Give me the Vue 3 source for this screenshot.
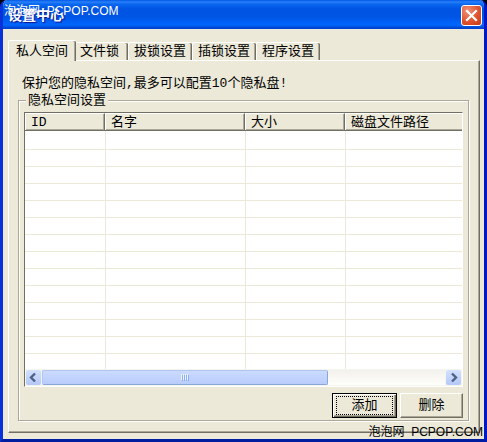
<script setup>
import { ref } from 'vue'

// 选项卡
const tabs = ['私人空间', '文件锁', '拔锁设置', '插锁设置', '程序设置']
const active = ref(0)

// 列表列定义，最后一列占满剩余宽度
const columns = [
  { name: 'ID', cls: 'col-id' },
  { name: '名字', cls: 'col-name' },
  { name: '大小', cls: 'col-size' },
  { name: '磁盘文件路径', cls: 'col-path' }
]
const rowCount = 14

// 水印文字，中间是两个空格
const mark = '泡泡网  PCPOP.COM'
</script>

<template>
  <div class="desktop">
    <div class="window">
      <header class="title-bar">
        <h1>设置中心</h1>
        <button class="close" type="button" aria-label="关闭">
          <svg width="21" height="21" viewBox="0 0 21 21">
            <path d="M6 6l9 9M15 6l-9 9" stroke="#fff" stroke-width="2.2" stroke-linecap="square" />
          </svg>
        </button>
      </header>

      <main class="body">
        <nav class="tabs" role="tablist">
          <button
            v-for="(tab, i) in tabs"
            :key="tab"
            type="button"
            role="tab"
            class="tab"
            :class="{ active: active === i }"
            :aria-selected="active === i"
            @click="active = i"
          >{{ tab }}</button>
        </nav>

        <section class="page">
          <p class="tip">保护您的隐私空间,最多可以配置10个隐私盘!</p>
          <fieldset class="group">
            <legend>隐私空间设置</legend>
            <div class="list">
              <div class="list-view">
                <table>
                  <thead>
                    <tr>
                      <th v-for="col in columns" :key="col.name" :class="col.cls">{{ col.name }}</th>
                    </tr>
                  </thead>
                  <tbody>
                    <tr v-for="r in rowCount" :key="r">
                      <td v-for="col in columns" :key="col.name"></td>
                    </tr>
                  </tbody>
                </table>
              </div>
              <div class="scrollbar">
                <button class="arrow" type="button" aria-label="向左">
                  <svg width="15" height="15" viewBox="0 0 15 15">
                    <path d="M9 3.5l-4 4 4 4" fill="none" stroke="#4d6185" stroke-width="2.4" />
                  </svg>
                </button>
                <div class="track">
                  <div class="thumb"><i></i><i></i><i></i><i></i></div>
                </div>
                <button class="arrow" type="button" aria-label="向右">
                  <svg width="15" height="15" viewBox="0 0 15 15">
                    <path d="M6 3.5l4 4-4 4" fill="none" stroke="#4d6185" stroke-width="2.4" />
                  </svg>
                </button>
              </div>
            </div>
            <div class="actions">
              <button class="btn default" type="button"><span>添加</span></button>
              <button class="btn" type="button"><span>删除</span></button>
            </div>
          </fieldset>
        </section>
      </main>
    </div>

    <span class="mark top">{{ mark }}</span>
    <span class="mark bottom">{{ mark }}</span>
  </div>
</template>

<style>
body { margin: 0; background: #000; }
</style>

<style scoped>
* { box-sizing: border-box; }
.desktop {
  position: relative; height: 100vh; background: #000;
  font-family: "Liberation Mono", "Noto Sans CJK SC", monospace;
  font-size: 13px; line-height: 16px; color: #000;
}
button { font: inherit; color: inherit; padding: 0; margin: 0; }
svg { display: block; }

.window {
  display: flex; flex-direction: column; height: 100%;
  background: #ece9d8; border-radius: 7px 7px 0 0; overflow: hidden;
  border: solid #0831d9; border-width: 0 3px 3px; border-bottom-color: #001ea0; border-right-color: #0019c0;
}
.title-bar {
  display: flex; align-items: center; justify-content: space-between;
  height: 29px; flex: none; margin: 0 -3px; padding: 2px 5px 0 8px;
  background: linear-gradient(#0058e6 0, #2a80fa 2px, #0a68f0 4px, #0054e3 9px, #0055e5 17px, #0066ff 25px, #0050d8 27px, #003dd0 29px);
}
.title-bar h1 {
  margin: 0; font-size: 14px; font-weight: bold; color: #fff;
  text-shadow: 1px 1px 1px #0f1089;
}
.close {
  width: 21px; height: 21px; border: 1px solid #fff; border-radius: 3px;
  background: radial-gradient(circle at 30% 25%, #f0907a, #e0532f 55%, #c43a14);
}
.close svg { margin: -1px; }

.body { flex: 1; min-height: 0; display: flex; flex-direction: column; padding: 11px 4px 6px 5px; }

.tabs { display: flex; align-items: flex-end; height: 20px; flex: none; }
.tab {
  height: 18px; padding: 0 5px; background: #ece9d8;
  border: solid #fff; border-width: 1px 0 0 1px; border-radius: 2px 2px 0 0;
  box-shadow: inset -1px 0 #716f64, inset -2px 0 #aca899;
  white-space: nowrap; line-height: 17px;
}
.tab + .tab { padding: 0 6px 0 5px; }
.tab.active { height: 21px; margin-bottom: -1px; padding: 0 8px 0 7px; position: relative; }
.tab.active + .tab { padding: 0 9px 0 4px; border-left: 0; }

.page {
  flex: 1; min-height: 0; display: flex; flex-direction: column;
  padding: 15px 10px 11px 9px;
  border: 1px solid; border-color: #fff #716f64 #716f64 #fff;
  box-shadow: inset -1px -1px #aca899;
}
.tip { margin: 0 4px; white-space: nowrap; }
.group {
  flex: 1; min-height: 0; min-width: 0; display: flex; flex-direction: column;
  margin: 0; padding: 4px 5px 2px;
  border: 1px solid #aca899; box-shadow: 1px 1px #fff, inset 1px 1px #fff;
}
legend { margin-left: 2px; padding: 2px 2px 0; line-height: 14px; background: #ece9d8; }

.list {
  flex: 1; min-height: 0; display: flex; flex-direction: column;
  background: #fff; border: 1px solid; border-color: #716f64 #fff #fff #716f64;
}
.list-view { flex: 1; min-height: 0; overflow: hidden; }
table { width: 100%; table-layout: fixed; border-collapse: separate; border-spacing: 0; }
th {
  height: 18px; padding: 2px 0 0 6px; background: #ece9d8;
  text-align: left; font-weight: normal; white-space: nowrap; line-height: 14px;
  border-top: 1px solid #fff; border-bottom: 1px solid #716f64; border-right: 1px solid #716f64;
  box-shadow: inset 1px 0 #fff, inset -1px -1px #aca899;
}
th:last-child { border-right: 0; box-shadow: inset 1px 0 #fff, inset 0 -1px #aca899; }
.col-id { width: 80px; }
.col-name { width: 140px; }
.col-size { width: 100px; }
td { height: 17px; padding: 0; border-bottom: 1px solid #ece9d8; border-left: 1px solid #ece9d8; }
td:first-child { border-left: 0; }
tbody tr:first-child td { height: 19px; }

.scrollbar { display: flex; height: 17px; flex: none; gap: 1px; padding: 1px; background: #f5f5f0; }
.arrow {
  width: 15px; height: 15px; flex: none; border: 0; border-radius: 2px;
  background: linear-gradient(#d3e0ff, #b4c8f6);
}
.track { flex: 1; display: flex; background: linear-gradient(#f3f1ec, #fefefb); }
.thumb {
  width: 71%; display: flex; align-items: center; justify-content: center; gap: 1px;
  background: linear-gradient(#cbdaff, #b9cdfb); border: 1px solid #b0c4f0; border-bottom-color: #8aa5d8; border-right-color: #8aa5d8;
  border-radius: 2px;
}
.thumb i { width: 1px; height: 6px; background: #8cb0f8; box-shadow: -1px -1px #eef4fe; }

.actions { display: flex; justify-content: flex-end; gap: 3px; margin-top: 6px; }
.btn {
  width: 63px; height: 25px; padding: 2px; background: #ece9d8;
  border: 1px solid; border-color: #fff #716f64 #716f64 #fff;
  box-shadow: inset -1px -1px #aca899;
}
.btn.default { width: 65px; border-color: #000; box-shadow: inset 1px 1px #fff, inset -1px -1px #716f64, inset -2px -2px #aca899; }
.btn span { display: block; height: 100%; line-height: 18px; border: 1px solid transparent; }
.btn.default span { margin: 0 1px; border: 1px dotted #000; }

.mark {
  position: absolute; font-family: "Liberation Sans", "Noto Sans CJK SC", sans-serif;
  font-size: 12px; white-space: pre; pointer-events: none;
}
.mark.top { left: 4px; top: 3px; color: #fff; }
.mark.bottom { right: 4px; bottom: 2px; color: #000; }
</style>
